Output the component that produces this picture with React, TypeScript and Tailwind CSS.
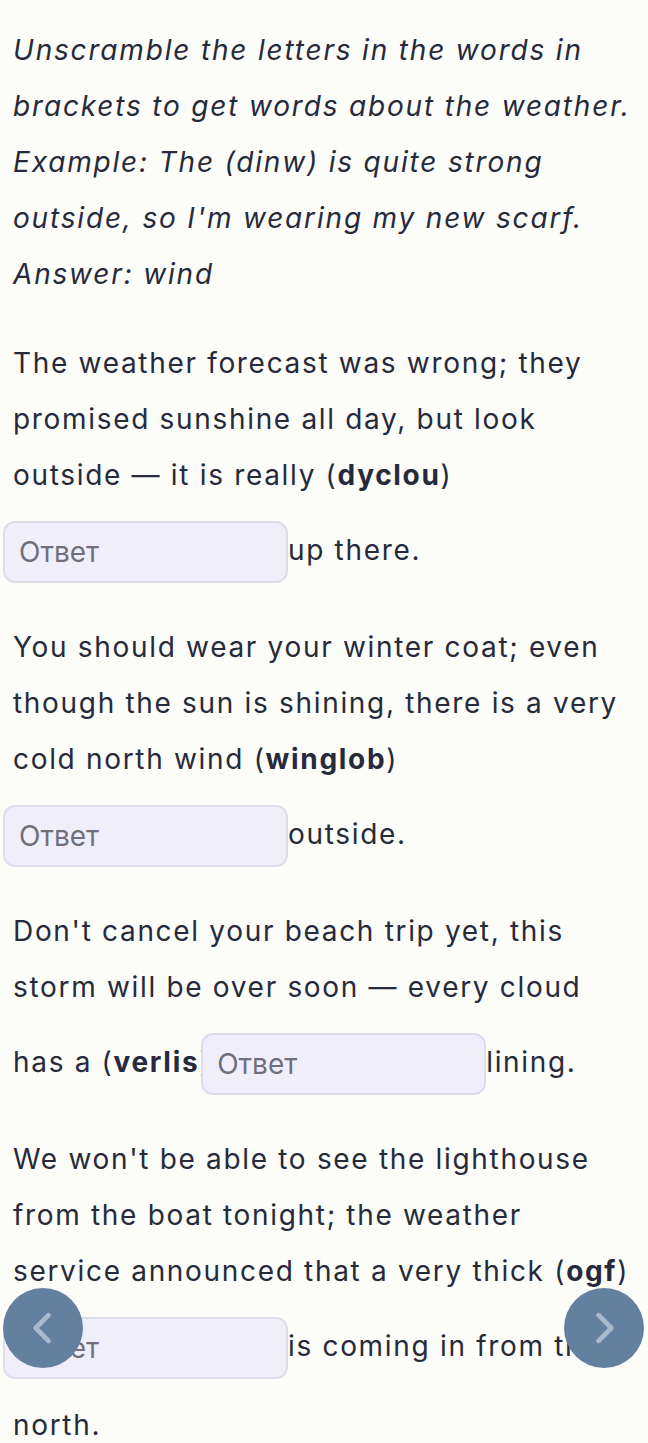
import React from "react";

type Part = string | { b: string } | { input: true };

// zero-width space after ")" lets the line break there while the input tucks in with a negative margin
const tasks: Part[][] = [
  [
    "The weather forecast was wrong; they promised sunshine all day, but look outside — it is really (",
    { b: "dyclou" },
    ")\u200B",
    { input: true },
    "up there.",
  ],
  [
    "You should wear your winter coat; even though the sun is shining, there is a very cold north wind (",
    { b: "winglob" },
    ")\u200B",
    { input: true },
    "outside.",
  ],
  [
    "Don't cancel your beach trip yet, this storm will be over soon — every cloud has a (",
    { b: "verlis" },
    ")\u200B",
    { input: true },
    "lining.",
  ],
  [
    "We won't be able to see the lighthouse from the boat tonight; the weather service announced that a very thick (",
    { b: "ogf" },
    ")\u200B",
    { input: true },
    "is coming in from the north.",
  ],
];

function Gap() {
  return (
    <input
      type="text"
      placeholder="Ответ"
      className="relative my-[18px] -ml-[10px] box-border inline-block h-[62px] w-[285px] rounded-xl border-2 border-[#dcdfe9] bg-[#f1eefb] px-[14px] align-middle text-[28px] tracking-normal text-[#262a3b] outline-none placeholder:text-[#6f6e7a]"
      style={{ fontFamily: "Inter, 'Noto Sans', sans-serif" }}
    />
  );
}

function Chevron({ dir }: { dir: "left" | "right" }) {
  return (
    <svg viewBox="0 0 24 24" className="h-[44px] w-[44px]" fill="none" stroke="#a9b9cc" strokeWidth={2.6} strokeLinecap="round" strokeLinejoin="round">
      {dir === "left" ? <path d="M15 5l-7 7 7 7" /> : <path d="M9 5l7 7-7 7" />}
    </svg>
  );
}

export default function App() {
  return (
    <div
      className="min-h-[1443px] bg-[#fcfcf8] px-[13px] pt-[22px] text-[28px] leading-[56px] tracking-[0.06em] text-[#262a3b]"
      style={{ fontFamily: "Inter, 'Noto Sans', sans-serif" }}
    >
      <p className="mb-[33px] italic tracking-[0.065em]">
        Unscramble the letters in the words in brackets to get words about the weather.
        <br />
        Example: The (dinw) is quite strong outside, so I'm wearing my new scarf.
        <br />
        Answer: wind
      </p>
      {tasks.map((parts, i) => (
        <p key={i} className="mb-[18px]">
          {parts.map((p, j) =>
            typeof p === "string" ? (
              <React.Fragment key={j}>{p}</React.Fragment>
            ) : "b" in p ? (
              <b key={j} className="font-bold">{p.b}</b>
            ) : (
              <Gap key={j} />
            )
          )}
        </p>
      ))}

      <button className="fixed bottom-[75px] left-[3px] z-10 flex h-[80px] w-[80px] items-center justify-center rounded-full bg-[#64809f]">
        <Chevron dir="left" />
      </button>
      <button className="fixed bottom-[75px] right-[4px] z-10 flex h-[80px] w-[80px] items-center justify-center rounded-full bg-[#64809f]">
        <Chevron dir="right" />
      </button>
    </div>
  );
}
